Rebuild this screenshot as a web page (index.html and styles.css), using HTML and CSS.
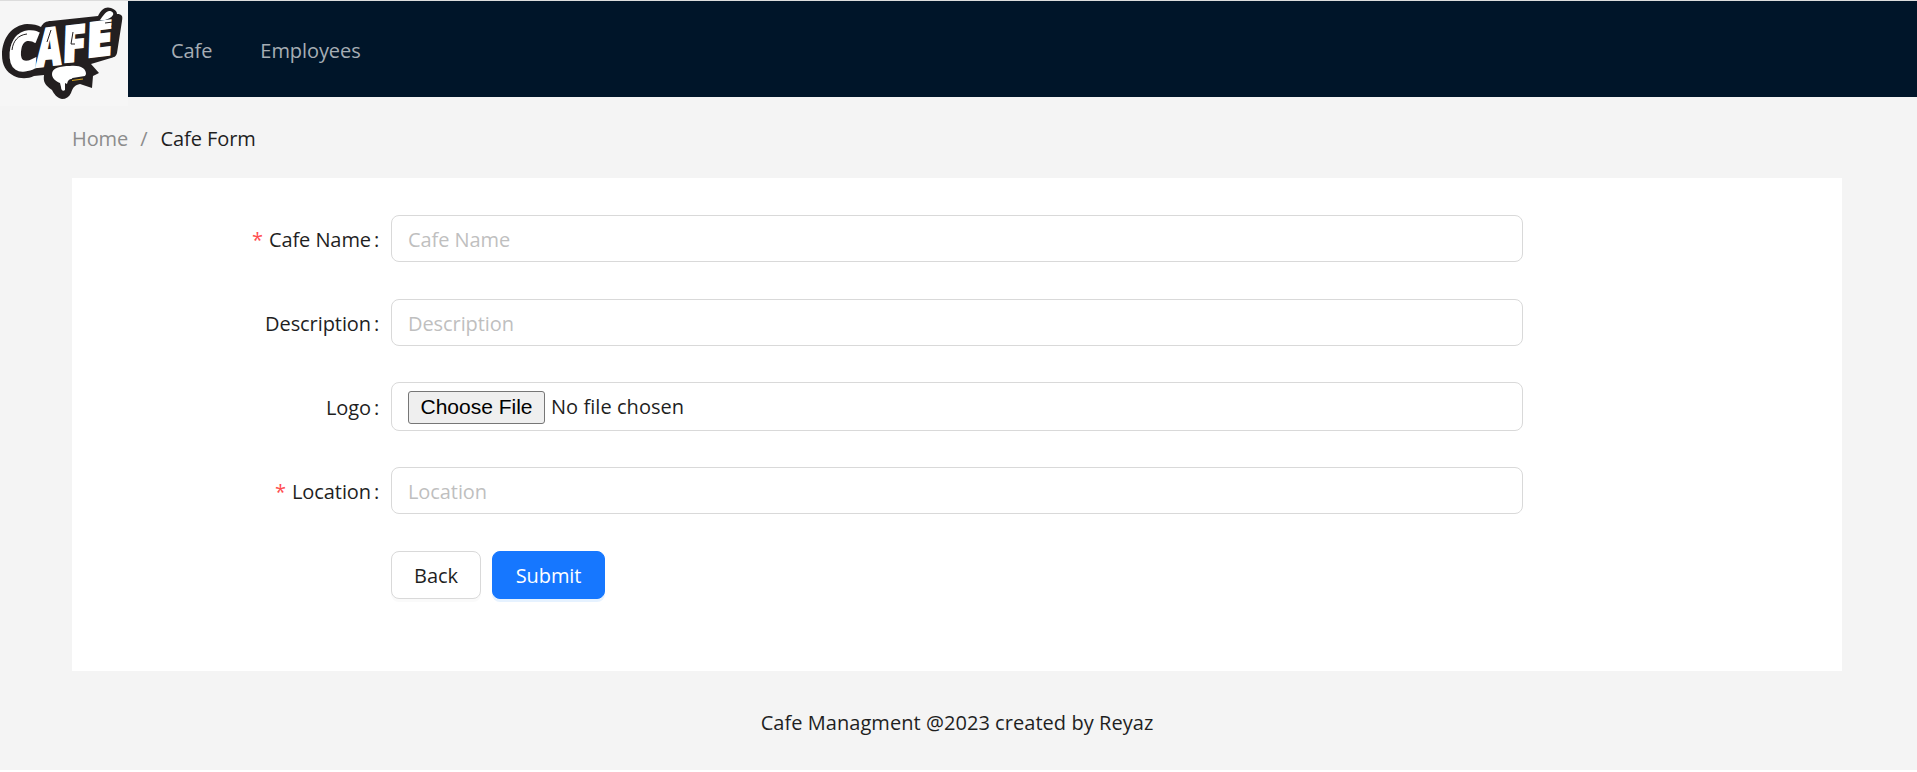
FILE: index.html
```html
<!DOCTYPE html>
<html lang="en">
<head>
<meta charset="utf-8">
<title>Cafe Form</title>
<link rel="stylesheet" href="styles.css">
</head>
<body>
<div class="layout">
  <header class="header">
    <div class="logo">
      <svg class="logo-art" width="128" height="105" viewBox="0 1 128 105" role="img" aria-label="Café">
        <path fill="#231f20" d="M2 55C2 38 12 25 27 24C33 24 38 25 41 27C43 23 46 21 51 21L98 16C101 9 106 6 111 8C116 10 117 12 117 14C122 14 123 16 122 21L117 53C116 57 114 57 111 58L91 64L99 73L93 76L92 88L80 84C75 85 73 87 71 93C69 97 66 99 62 99C57 98 54 94 52 90C45 85 43 82 44 75L34 76C28 79 20 79 14 76C6 72 2 65 2 55Z"/>
        <g class="logo-letters">
          <text transform="translate(7 71.500) rotate(-5) skewX(-9) scale(1.02 1.14)">C</text>
          <text transform="translate(36 67) rotate(-7) skewX(-10) scale(.75 1.12)">A</text>
          <text transform="translate(62 62.500) rotate(-6) skewX(-8) scale(.92 1.08)">F</text>
          <text transform="translate(86 57.500) rotate(-7) skewX(-9) scale(1.020 1.03)">E</text>
        </g>
        <path fill="#fff" d="M100 20C103 16 105 12 109 11C112 11 114 13 113 15C111 18 108 19 105 20Z"/>
        <path fill="#fff" d="M52 74C52 68 60 66 70 66C80 65 86 68 86 74C85 78 80 79 73 79C68 79 68 81 67 84L65 83L65 90C63 92 61 90 61 87L60 83C55 81 52 78 52 74Z"/>
        <path fill="none" stroke="#231f20" stroke-width="1" d="M12 50C13 41 18 35 27 34M47 42L51 30M73 32L71 44L75 44M105 23L113 22L112 27"/>
        <path fill="none" stroke="#231f20" stroke-width="2" d="M69 83L73 79L85 77"/>
        <path fill="none" stroke="#d9a520" stroke-width="1" d="M72 80.500L83 79"/>
      </svg>
    </div>
    <nav class="menu">
      <a class="menu-cafe">Cafe</a>
      <a class="menu-employees">Employees</a>
    </nav>
  </header>
  <main class="content">
    <div class="breadcrumb"><span class="crumb-home">Home</span><span class="crumb-separator">/</span><span class="crumb-current">Cafe Form</span></div>
    <form class="card">
      <div class="row">
        <label class="label" for="name"><span class="required">*</span><span class="label-name">Cafe Name</span><span class="colon">:</span></label>
        <input class="input input-name" id="name" type="text" placeholder="Cafe Name">
      </div>
      <div class="row">
        <label class="label" for="description"><span class="label-description">Description</span><span class="colon">:</span></label>
        <input class="input input-description" id="description" type="text" placeholder="Description">
      </div>
      <div class="row row-file">
        <label class="label" for="logo"><span class="label-logo">Logo</span><span class="colon">:</span></label>
        <input class="input input-file" id="logo" type="file">
      </div>
      <div class="row">
        <label class="label" for="location"><span class="required">*</span><span class="label-location">Location</span><span class="colon">:</span></label>
        <input class="input input-location" id="location" type="text" placeholder="Location">
      </div>
      <div class="actions">
        <button class="button button-back" type="button">Back</button>
        <button class="button button-submit" type="button">Submit</button>
      </div>
    </form>
  </main>
  <footer class="footer"><span class="footer-text">Cafe Managment @2023 created by Reyaz</span></footer>
</div>
</body>
</html>
```
FILE: styles.css
```css
* {
  box-sizing: border-box;
}

body {
  margin: 0;
  background: #fff;
  color: #1f1f1f;
  font: 20px/32px "Open Sans", "Noto Sans", sans-serif;
  letter-spacing: -0.08px;
}

.layout {
  height: 770px;
  background: #f4f4f4;
  border-top: 1px solid #dcdcdc;
}

.header {
  display: flex;
  height: 96px;
  background: #001529;
}

.logo {
  width: 128px;
  height: 105px;
  flex: none;
  background: #f6f6f6;
}

.logo-art {
  display: block;
}

.logo-letters {
  fill: #fff;
  stroke: #fff;
  stroke-width: 2px;
  font: 800 46px "Open Sans", sans-serif;
  letter-spacing: 0;
}

.menu {
  display: flex;
  align-items: center;
  gap: 48px;
  padding: 4px 0 0 43px;
  color: #a6adb4;
}

.content {
  padding: 26px 75px 0 72px;
}

.breadcrumb {
  display: flex;
  height: 55px;
  color: #8c8c8c;
}

.crumb-separator {
  margin: 0 13px 0 12px;
}

.crumb-current {
  color: #1f1f1f;
}

.card {
  display: flex;
  flex-direction: column;
  gap: 37px;
  height: 493px;
  padding: 37px 319px 0 0;
  background: #fff;
}

.row {
  display: flex;
  align-items: center;
  height: 47px;
}

.row-file {
  height: 49px;
  margin: -1px 0;
}

.label {
  display: flex;
  justify-content: flex-end;
  width: 319px;
  padding: 2px 11px 0 0;
}

.required {
  margin-right: 6px;
  color: #ff4d4f;
}

.colon {
  width: 6px;
  margin-left: 3px;
}

.input {
  flex: 1;
  min-width: 0;
  height: 100%;
  padding: 2px 16px 0;
  border: 1px solid #d9d9d9;
  border-radius: 8px;
  background: #fff;
  color: #1f1f1f;
  font: inherit;
  letter-spacing: inherit;
}

.input::placeholder {
  color: #bfbfbf;
}

.input-file {
  padding: 7px 16px 0;
  letter-spacing: 0.05px;
}

.input-file::file-selector-button {
  width: 137px;
  height: 33px;
  margin: 1px 6px 0 0;
  padding: 0 0 2px;
  border: 1px solid #767676;
  border-radius: 3px;
  background: #efefef;
  color: #000;
  font: 21px/29px "Liberation Sans", sans-serif;
  letter-spacing: 0;
}

.actions {
  display: flex;
  gap: 11px;
  padding-left: 319px;
}

.button {
  height: 48px;
  padding: 1px 0 0;
  border: 1px solid #d9d9d9;
  border-radius: 8px;
  background: #fff;
  color: #1f1f1f;
  font: inherit;
  letter-spacing: inherit;
  box-shadow: 0 3px 0 #fafafa;
}

.button-back {
  width: 90px;
}

.button-submit {
  width: 113px;
  border-color: #1677ff;
  background: #1677ff;
  color: #fff;
  box-shadow: 0 3px 0 #e6f2ff;
}

.footer {
  padding: 36px 3px 0 0;
  text-align: center;
  letter-spacing: 0.05px;
}
```
